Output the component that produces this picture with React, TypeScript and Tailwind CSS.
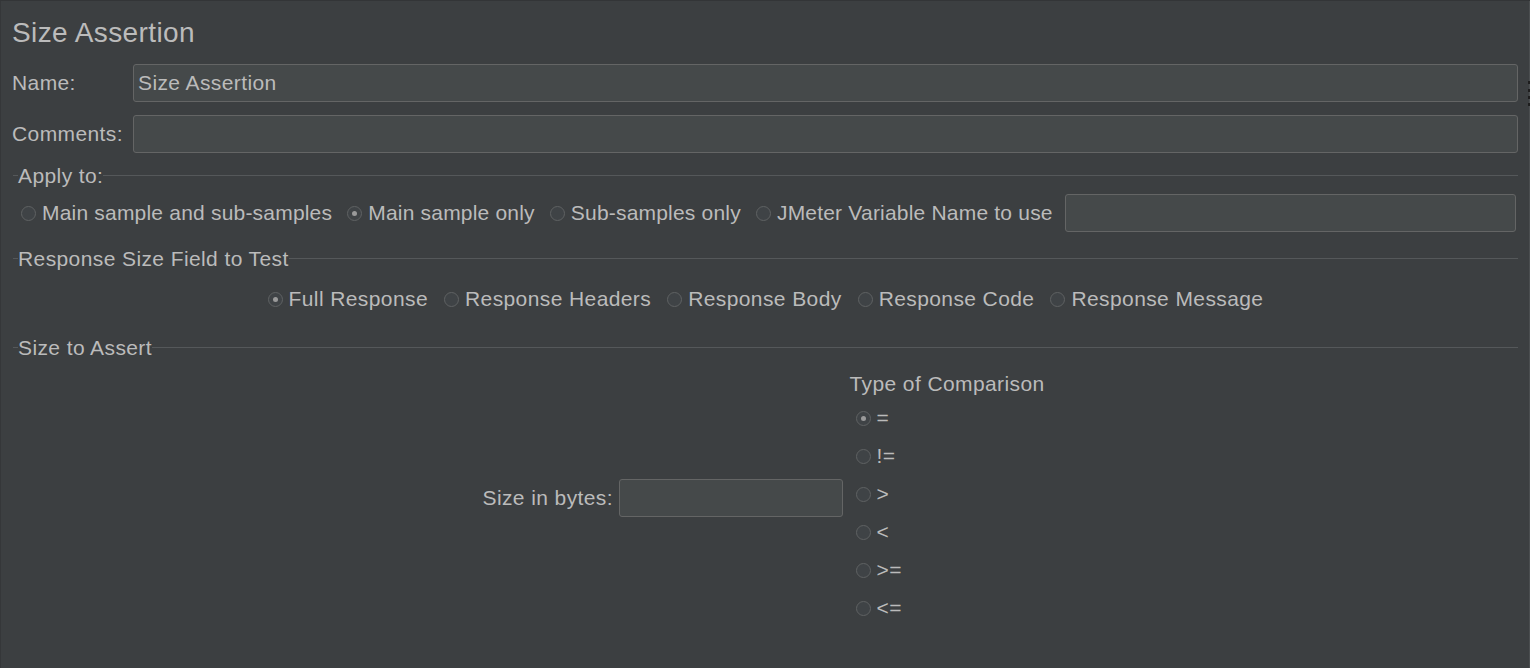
import React from "react";

const Radio = ({ checked, label, className = "" }: { checked?: boolean; label: string; className?: string }) => (
  <div className={"flex items-center shrink-0 " + className}>
    <div className="w-[15px] h-[15px] rounded-full border border-[#5f6263] bg-[#3f4346] flex items-center justify-center shrink-0">
      {checked && <div className="w-[5px] h-[5px] rounded-full bg-[#9a9a9a]" />}
    </div>
    <span className="ml-[6px] whitespace-nowrap">{label}</span>
  </div>
);

const SectionHeader = ({ title, className = "" }: { title: string; className?: string }) => (
  <div className={"flex items-center h-[22px] " + className}>
    <div className="w-[5px] h-px bg-[#55585a]" />
    <span className="whitespace-nowrap leading-none">{title}</span>
    <div className="flex-1 h-px bg-[#55585a]" />
  </div>
);

const Input = ({ value = "", className = "" }: { value?: string; className?: string }) => (
  <div className={"h-[38px] bg-[#45494a] border border-[#646565] rounded-[3px] flex items-center px-[4px] " + className}>
    {value}
  </div>
);

export default function App() {
  return (
    <div
      className="relative w-[1530px] h-[668px] overflow-hidden bg-[#3c3f41] text-[#bbbbbb] text-[21px] tracking-[0.4px] border-t border-[#333537] border-l border-l-[#353739]"
      style={{ fontFamily: '"Liberation Sans", Arial, sans-serif' }}
    >
      <div className="pl-[11px] pr-[12px]">
        <div className="h-[63px] flex items-center text-[28px] tracking-[0.4px]">Size Assertion</div>
        <div className="flex items-center h-[38px]">
          <div className="w-[121px] shrink-0">Name:</div>
          <Input value="Size Assertion" className="flex-1" />
        </div>
        <div className="flex items-center h-[38px] mt-[13px]">
          <div className="w-[121px] shrink-0">Comments:</div>
          <Input className="flex-1" />
        </div>

        <div className="pl-[1px]">
          <SectionHeader title="Apply to:" className="mt-[11px]" />
          <div className="flex items-center h-[38px] mt-[8px] pl-[8px] pr-[2px] tracking-[0.2px]">
            <Radio label="Main sample and sub-samples" className="mr-[15px]" />
            <Radio checked label="Main sample only" className="mr-[15px]" />
            <Radio label="Sub-samples only" className="mr-[15px]" />
            <Radio label="JMeter Variable Name to use" className="mr-[12px]" />
            <Input className="flex-1" />
          </div>

          <SectionHeader title="Response Size Field to Test" className="mt-[15px]" />
          <div className="flex items-center justify-center h-[30px] mt-[15px] gap-[16px]">
            <Radio checked label="Full Response" />
            <Radio label="Response Headers" />
            <Radio label="Response Body" />
            <Radio label="Response Code" />
            <Radio label="Response Message" />
          </div>

          <SectionHeader title="Size to Assert" className="mt-[22px]" />
          <div className="flex justify-center items-center mt-[11px]">
            <div className="w-[360px] flex items-center justify-end">
              <span className="whitespace-nowrap">Size in bytes:</span>
              <Input className="w-[224px] ml-[6px]" />
            </div>
            <div className="w-[199px] ml-[7px] flex flex-col">
              <div className="h-[30px] flex items-center whitespace-nowrap">Type of Comparison</div>
              {["=", "!=", ">", "<", ">=", "<="].map((op, i) => (
                <div key={op} className="h-[38px] flex items-center pl-[6px]">
                  <Radio checked={i === 0} label={op} />
                </div>
              ))}
            </div>
          </div>
        </div>
      </div>

      <div className="absolute right-0 top-0 w-px h-full bg-[#4b4e50]" />
      <div className="absolute right-0 top-[80px] w-[2px] h-[3px] bg-[#1e1e1e]" />
      <div className="absolute right-0 top-[88px] w-[2px] h-[3px] bg-[#1e1e1e]" />
      <div className="absolute right-0 top-[95px] w-[2px] h-[3px] bg-[#1e1e1e]" />
      <div className="absolute right-0 top-[102px] w-[2px] h-[3px] bg-[#1e1e1e]" />
    </div>
  );
}
